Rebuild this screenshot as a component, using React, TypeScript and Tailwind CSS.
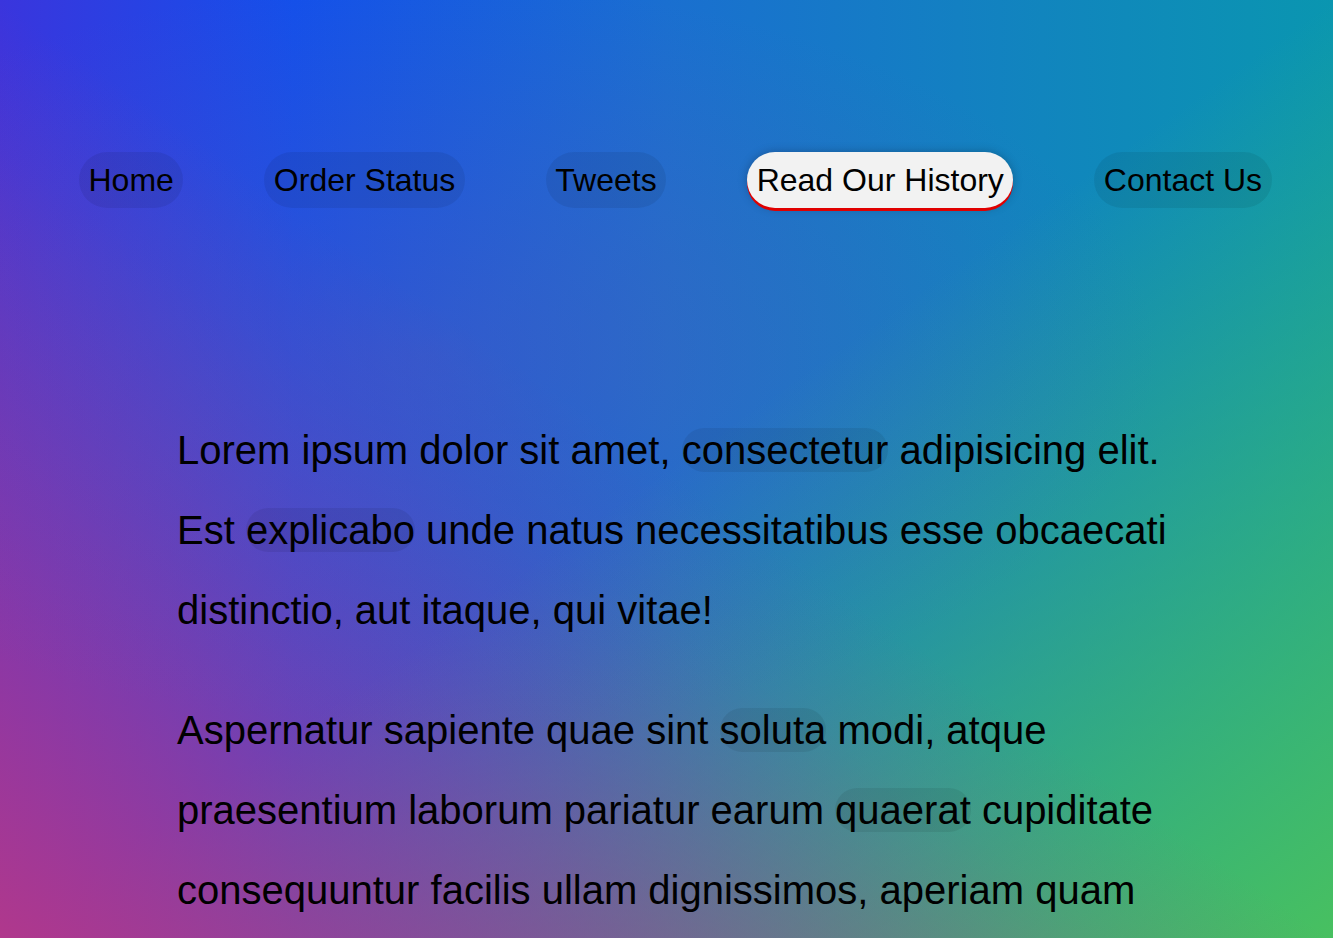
const links = ["Home", "Order Status", "Tweets", "Read Our History", "Contact Us"];
const active = "Read Our History";

function Mark({ children }: { children: string }) {
  return <span className="rounded-full bg-[rgba(0,0,0,0.07)]">{children}</span>;
}

export default function App() {
  return (
    <div
      className="h-[938px] w-full overflow-hidden text-black [font-family:'Liberation_Sans',Arial,sans-serif] bg-[radial-gradient(ellipse_55%_40%_at_32%_38%,rgba(110,85,165,0.32)_0%,rgba(110,85,165,0)_100%),linear-gradient(to_top_right,rgba(176,56,140,1)_0%,rgba(176,56,140,0.5)_25%,rgba(176,56,140,0.12)_42%,rgba(176,56,140,0)_50%),linear-gradient(to_top_left,rgba(72,192,96,1)_0%,rgba(72,192,96,0)_50%),linear-gradient(to_right,#3a35dd_0%,#1450ea_22%,#1a6fd0_50%,#0a96b0_100%)]"
    >
      {/* nav */}
      <nav className="flex items-center gap-[81px] pl-[79px] pt-[152px]">
        {links.map((l) =>
          l === active ? (
            <a
              key={l}
              className="rounded-full bg-[#f2f2f2] px-[9.5px] py-[9px] text-[32px] leading-[38px] shadow-[0_3px_0_#e00000,0_0_10px_rgba(0,0,0,0.25)]"
            >
              {l}
            </a>
          ) : (
            <a
              key={l}
              className="rounded-full bg-[rgba(0,0,0,0.07)] px-[9.5px] py-[9px] text-[32px] leading-[38px]"
            >
              {l}
            </a>
          )
        )}
      </nav>

      {/* copy */}
      <main className="ml-[177px] mt-[202px] w-[1000px] text-[40px] leading-[80px]">
        <p className="my-[40px]">
          Lorem ipsum dolor sit amet, <Mark>consectetur</Mark> adipisicing elit. Est{" "}
          <Mark>explicabo</Mark> unde natus necessitatibus esse obcaecati distinctio, aut itaque, qui
          vitae!
        </p>
        <p className="my-[40px]">
          Aspernatur sapiente quae sint <Mark>soluta</Mark> modi, atque praesentium laborum pariatur
          earum <Mark>quaerat</Mark> cupiditate consequuntur facilis ullam dignissimos, aperiam quam
          voluptatibus minima sequi.
        </p>
      </main>
    </div>
  );
}
